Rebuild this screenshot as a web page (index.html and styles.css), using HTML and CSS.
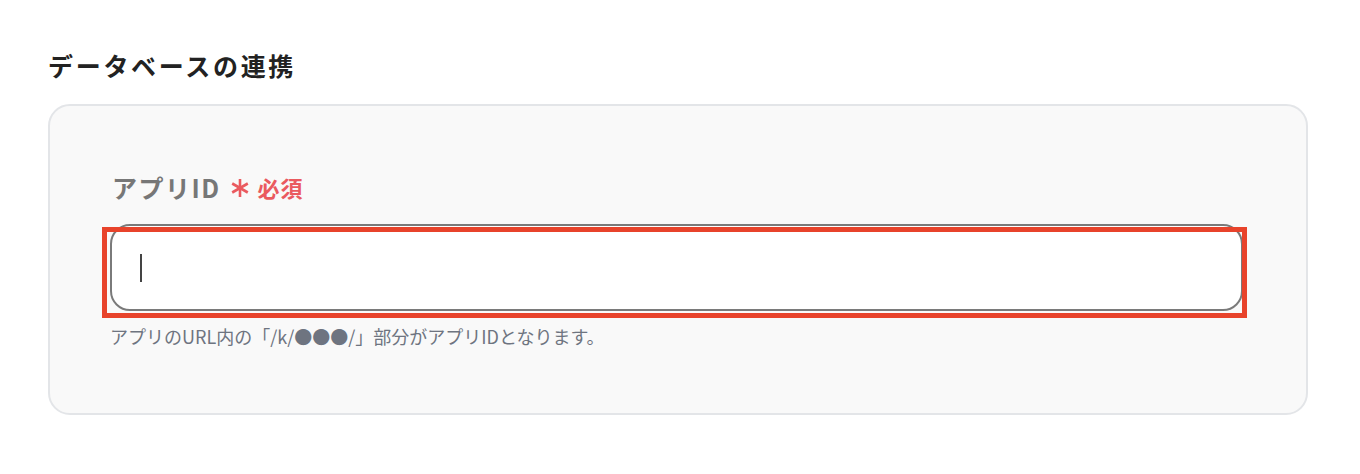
FILE: index.html
```html
<!DOCTYPE html>
<html lang="ja">
<head>
<meta charset="utf-8">
<link rel="stylesheet" href="styles.css">
</head>
<body>
<div class="page">
  <h2 class="section-title">データベースの連携</h2>
  <div class="card">
    <div class="field-label">
      <span class="label-text">アプリID</span>
      <svg class="req-mark" width="18" height="20" viewBox="0 0 18 20" aria-hidden="true">
        <g stroke="#ea5a5f" stroke-width="2.6" stroke-linecap="butt">
          <line x1="9" y1="1" x2="9" y2="19"/>
          <line x1="1.2" y1="5.5" x2="16.8" y2="14.5"/>
          <line x1="1.2" y1="14.5" x2="16.8" y2="5.5"/>
        </g>
      </svg>
      <span class="req-text">必須</span>
    </div>
    <div class="input-wrap">
      <div class="input-box"><span class="caret"></span></div>
      <div class="highlight"></div>
    </div>
    <p class="help">アプリのURL内の「/k/●●●/」部分がアプリIDとなります。</p>
  </div>
</div>
</body>
</html>
```
FILE: styles.css
```css
* { box-sizing: border-box; }
html, body { margin: 0; padding: 0; background: #ffffff; }
body {
  font-family: "Noto Sans CJK JP", "Noto Sans", sans-serif;
  color: #222;
}
.page {
  padding: 45px 52px 0 48px;
}
.section-title {
  margin: 0;
  font-size: 25px;
  letter-spacing: 2.7px;
  line-height: 40px;
  font-weight: 700;
  color: #222;
}
.card {
  margin-top: 19px;
  border: 2px solid #e3e5e8;
  border-radius: 22px;
  background: #f9f9f9;
  padding: 64px 63px 64px 60px;
}
.field-label {
  display: flex;
  align-items: center;
  height: 34px;
}
.label-text {
  font-family: "Noto Sans CJK JP", sans-serif;
  font-size: 25px;
  font-weight: 700;
  letter-spacing: 1.5px;
  color: #777;
  line-height: 34px;
  margin-left: 2px;
}
.req-mark {
  display: block;
  margin-left: 10px;
  margin-top: 2px;
}
.req-text {
  font-size: 22px;
  font-weight: 700;
  letter-spacing: 1px;
  color: #ea5a5f;
  margin-left: 9px;
  line-height: 34px;
}
.input-wrap {
  position: relative;
  margin-top: 20px;
}
.input-box {
  height: 87px;
  border: 2px solid #7a7a7a;
  border-radius: 20px;
  background: #fff;
  padding: 28px 0 0 28px;
}
.caret {
  display: block;
  width: 2px;
  height: 28px;
  background: #444;
}
.highlight {
  position: absolute;
  left: -8px;
  top: 3px;
  width: 1145px;
  height: 91px;
  border: 5px solid #e8432b;
  pointer-events: none;
}
.help {
  margin: 12px 0 0 0;
  font-size: 18px;
  line-height: 26px;
  color: #6e7480;
}
```
